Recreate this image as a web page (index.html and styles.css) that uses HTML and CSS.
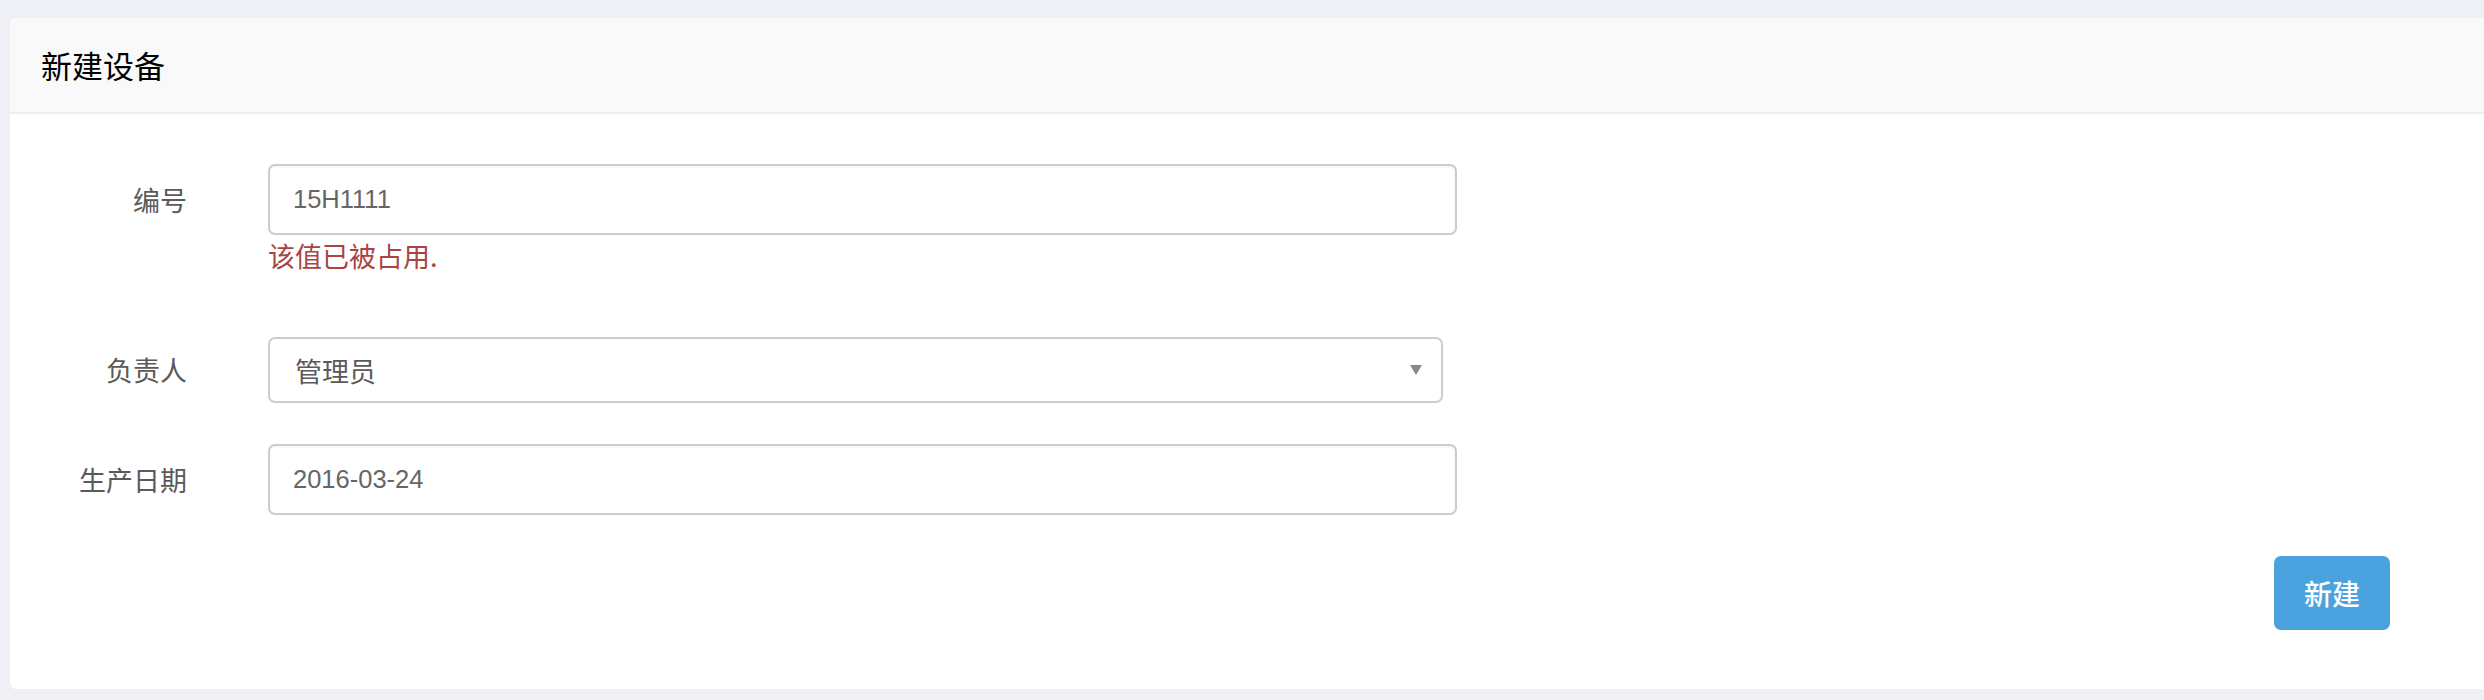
FILE: index.html
```html
<!DOCTYPE html>
<html lang="zh">
<head>
<meta charset="utf-8">
<title>新建设备</title>
<link rel="stylesheet" href="styles.css">
</head>
<body>
<div class="card">
  <div class="card-header"><h3 class="card-title">新建设备</h3></div>
  <div class="card-body">
    <form class="form">
      <div class="row row-first">
        <label class="label">编号</label>
        <div class="field">
          <input class="input" type="text" value="15H1111">
          <div class="error">该值已被占用.</div>
        </div>
      </div>
      <div class="row row-select">
        <label class="label">负责人</label>
        <div class="field">
          <div class="select-wrap">
            <select class="select"><option>管理员</option></select>
          </div>
        </div>
      </div>
      <div class="row row-date">
        <label class="label">生产日期</label>
        <div class="field">
          <input class="input" type="text" value="2016-03-24">
        </div>
      </div>
      <div class="actions">
        <button type="button" class="btn">新建</button>
      </div>
    </form>
  </div>
</div>
</body>
</html>
```

FILE: styles.css
```css
* { box-sizing: border-box; }
html, body { margin: 0; padding: 0; }
body {
  background: #eff0f5;
  font-family: "Liberation Sans", "Noto Sans CJK SC", sans-serif;
  height: 700px;
  overflow: hidden;
  padding-top: 18px;
  padding-left: 10px;
}
.card {
  background: #fff;
  border-radius: 6px 0 0 6px;
  height: 671px;
  display: flex;
  flex-direction: column;
}
.card-header {
  height: 96px;
  background: #f9f9f9;
  border-bottom: 2px solid #eceef3;
  border-radius: 6px 0 0 0;
  display: flex;
  align-items: center;
  padding-left: 31px;
}
.card-title {
  margin: 0;
  font-family: "Noto Sans CJK SC", sans-serif;
  font-weight: 400;
  font-size: 31px;
  color: #000;
  padding-bottom: 2px;
}
.card-body {
  padding-top: 50px;
}
.row {
  display: grid;
  grid-template-columns: 177px 1189px;
  column-gap: 81px;
  align-items: start;
}
.label {
  text-align: right;
  font-family: "Noto Sans CJK SC", sans-serif;
  font-size: 27px;
  color: #5a5a5a;
  line-height: 71px;
}
.row-select { margin-top: 64px; }
.row-select .label { line-height: 66px; }
.row-date { margin-top: 41px; }
.input {
  display: block;
  width: 1189px;
  height: 71px;
  border: 2px solid #cccccc;
  border-radius: 7px;
  padding: 0 23px;
  font-family: "Liberation Sans", "Noto Sans CJK SC", sans-serif;
  font-size: 25.5px;
  color: #666;
  background: #fff;
  box-shadow: inset 0 1px 2px rgba(0,0,0,0.06);
  outline: none;
}
.error {
  margin-top: 4px;
  line-height: 34px;
  font-family: "Noto Sans CJK SC", sans-serif;
  font-size: 27px;
  color: #a94442;
}
.select-wrap {
  position: relative;
  width: 1175px;
}
.select-wrap::after {
  content: "";
  position: absolute;
  right: 21px;
  top: 28px;
  border-left: 6px solid transparent;
  border-right: 6px solid transparent;
  border-top: 10px solid #888;
  pointer-events: none;
}
.select {
  -webkit-appearance: none;
  appearance: none;
  display: block;
  width: 1175px;
  height: 66px;
  border: 2px solid #cccccc;
  border-radius: 7px;
  padding: 0 25px;
  font-family: "Noto Sans CJK SC", sans-serif;
  font-size: 27px;
  color: #5a5a5a;
  background: #fff;
  outline: none;
}
.actions {
  display: flex;
  justify-content: flex-end;
  padding-right: 94px;
  margin-top: 41px;
}
.btn {
  width: 116px;
  height: 74px;
  border: none;
  border-radius: 7px;
  background: #4aa3df;
  color: #fff;
  font-family: "Noto Sans CJK SC", sans-serif;
  font-weight: 500;
  font-size: 28px;
  padding: 0;
  cursor: pointer;
}
```
